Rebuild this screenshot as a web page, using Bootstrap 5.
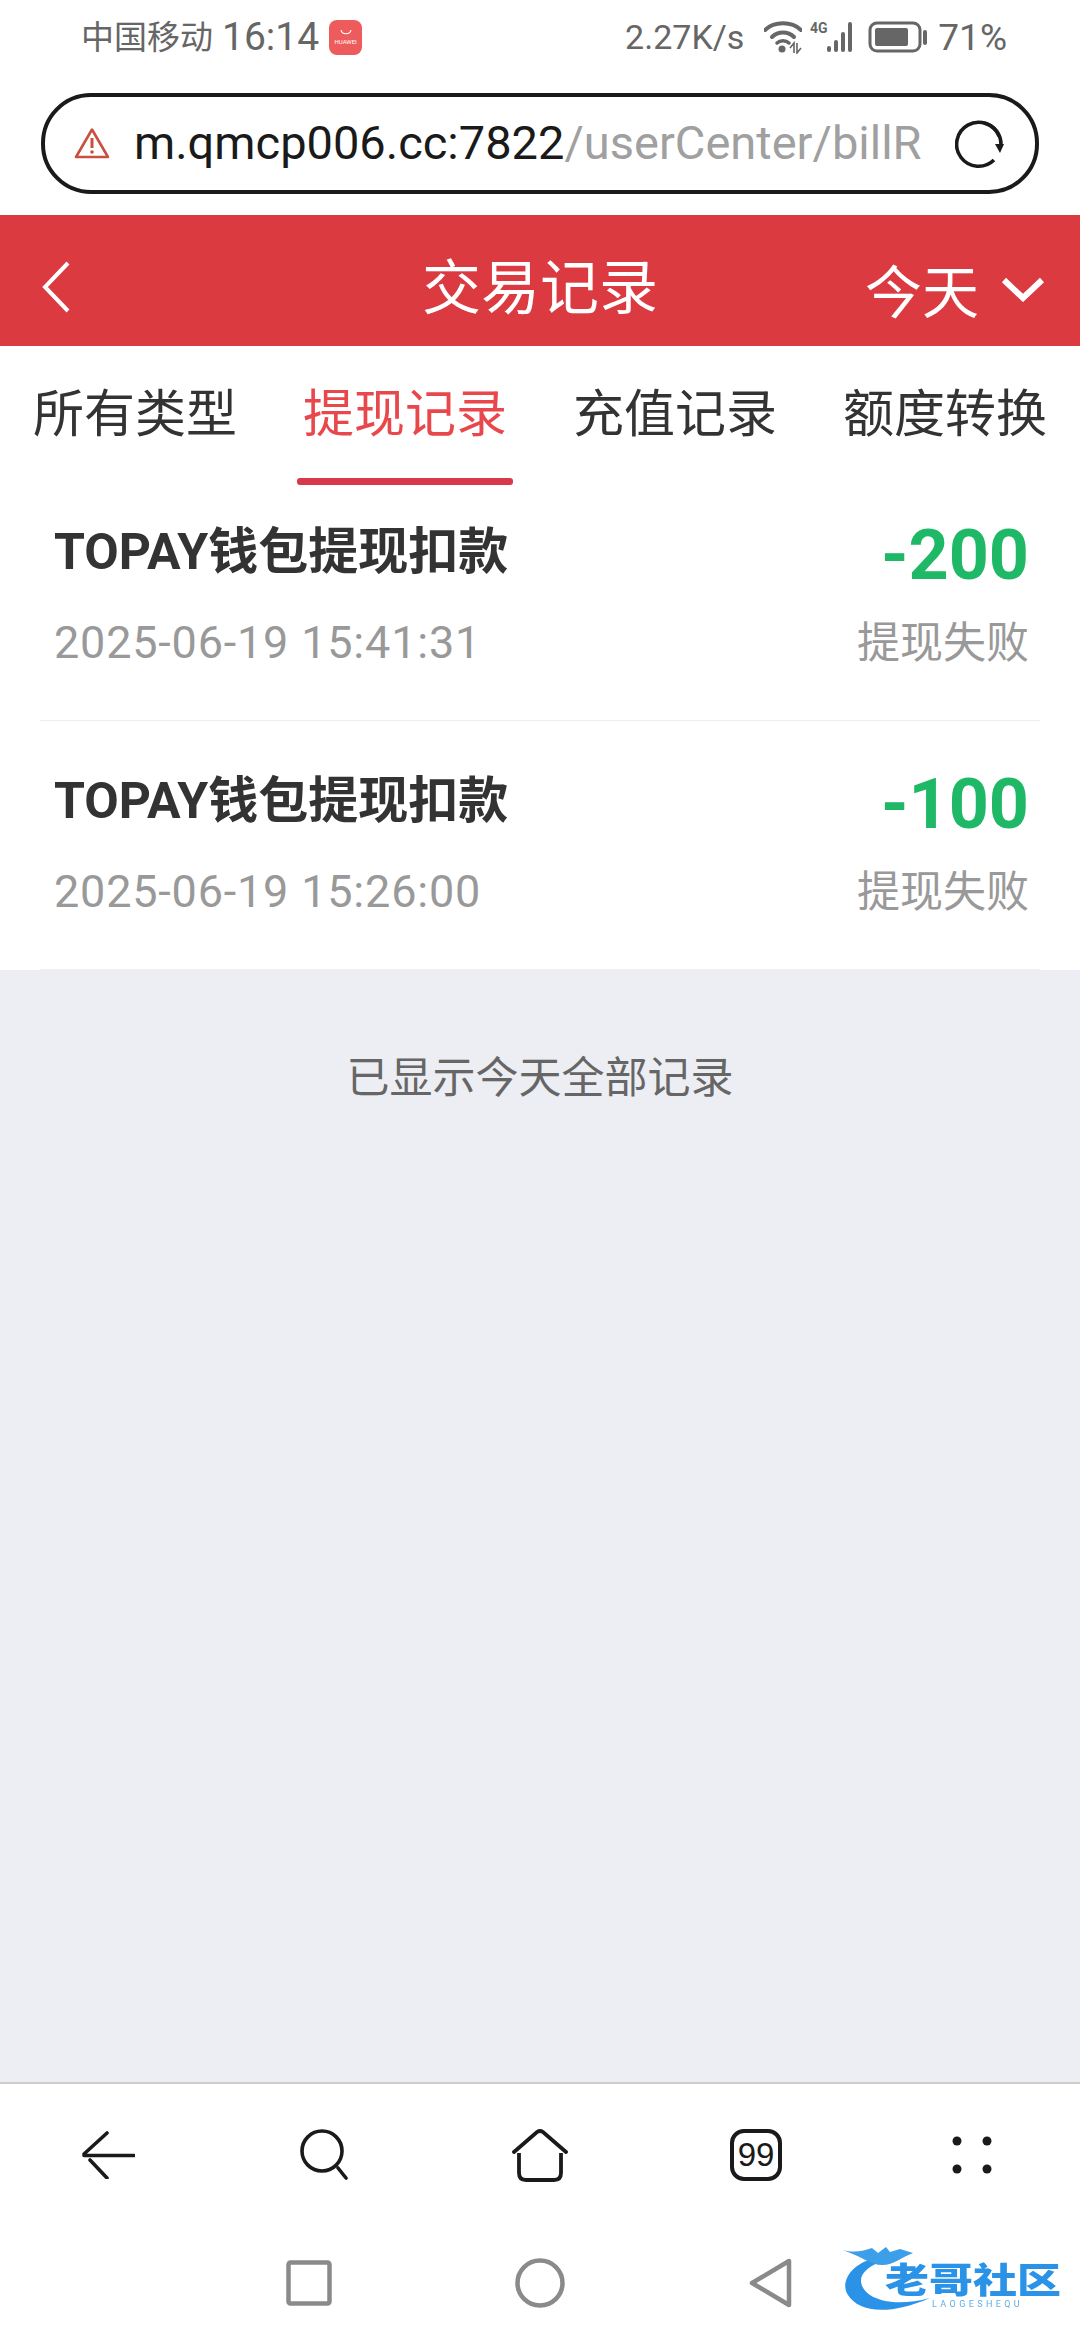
<!DOCTYPE html>
<html lang="zh-CN">
<head>
    <meta charset="UTF-8">
    <meta name="viewport" content="width=device-width, initial-scale=1.0">
    <title>交易记录</title>
    <link href="https://cdn.jsdelivr.net/npm/bootstrap@5.3.3/dist/css/bootstrap.min.css" rel="stylesheet">
    <style>
        html, body { width: 1080px; height: 2340px; overflow: hidden; }
        body { font-family: Roboto, "Noto Sans CJK SC", sans-serif; background: #fff; }
        svg { display: block; }

        /* status bar */
        .status-strip { height: 74px; padding: 0 73px 0 81px; color: #666; }
        .carrier { font-size: 33px; line-height: 1; }
        .clock { font-size: 39px; font-weight: 400; line-height: 1; margin-left: 9px; }
        .huawei-tile { width: 33px; height: 35px; margin-left: 10px; border-radius: 8px; background: #ee5b5c; color: #fff; font-size: 6px; line-height: 1; }
        .net-speed { font-size: 34px; line-height: 1; margin-right: 20px; }
        .batt-level { font-size: 37px; line-height: 1; margin-left: 10px; }

        /* address bar */
        .url-wrap { padding: 19px 41px 21px; }
        .url-box { height: 101px; border: 4px solid #1a1a1a; border-radius: 50px; padding: 0 30px 0 29px; }
        .url-text { font-size: 47px; line-height: 1.2; margin-left: 24px; white-space: nowrap; color: #1a1a1a; }
        .url-path { color: #a0a0a0; }

        /* red header */
        .top-band { height: 131px; background: #da3a40; color: #fff; padding: 0 35px 0 41px; }
        .band-back { margin-top: 12px; }
        .band-title { font-size: 59px; line-height: 1; left: 0; right: 0; top: 44px; }
        .band-range { font-size: 57px; line-height: 1; margin-top: 26px; }
        .band-chevron { margin-top: 16px; margin-left: 22px; }

        /* tabs */
        .tab-cell { padding-top: 34px; height: 140px; }
        .tab-label { font-size: 51px; line-height: 70px; color: #333; }
        .tab-cell.is-on .tab-label { color: #e8474c; }
        .tab-bar { width: 216px; height: 7px; margin-top: 28px; border-radius: 3px; }
        .tab-cell.is-on .tab-bar { background: #d8394a; }

        /* bill rows */
        .bill-list { padding: 0 40px; }
        .bill-row { padding: 50px 11px 47px 14px; border-bottom: 1px solid #eee; }
        .bill-row:first-child { padding-top: 36px; }
        .bill-name { font-size: 50px; font-weight: 700; line-height: 60px; color: #333; }
        .bill-time { font-size: 45px; line-height: 60px; margin-top: 31px; color: #999; letter-spacing: .8px; }
        .bill-amount { font-size: 70px; font-weight: 700; line-height: 60px; padding-top: 3px; color: #1fb866; }
        .bill-state { font-size: 43px; line-height: 60px; margin-top: 28px; color: #999; }

        .empty-area { background: #edeef3; }
        .end-note { font-size: 43px; line-height: 44px; padding-top: 86px; color: #666; }

        /* browser toolbar + system nav */
        .tool-strip { height: 143px; border-top: 2px solid #ccc; }
        .sys-strip { height: 115px; }
        .sys-slot { width: 231px; }
        .tab-count { font-family: "Liberation Sans", sans-serif; font-size: 33px; }

        /* watermark sits over the nav bar */
        .mark-logo { right: 18px; bottom: 28px; width: 220px; height: 67px; filter: blur(.5px); }
        .mark-cn { left: 43px; top: 20px; height: 32px; font-size: 44px; line-height: 32px; font-weight: 900; color: #2a93e8; white-space: nowrap; transform: scaleY(.8); }
        .mark-en { left: 90px; top: 54px; font-size: 9px; line-height: 10px; letter-spacing: 3.4px; color: #5aaeea; white-space: nowrap; }
    </style>
</head>
<body>

<div class="d-flex flex-column vh-100">

    <!-- Status bar -->
    <div class="status-strip d-flex justify-content-between align-items-center flex-shrink-0">
        <div class="d-flex align-items-center">
            <span class="carrier">中国移动</span>
            <span class="clock">16:14</span>
            <span class="huawei-tile d-flex flex-column align-items-center justify-content-center gap-1">
                <svg width="14" height="6" viewBox="0 0 14 6"><path d="M2 1c1 5 9 5 10 0" fill="none" stroke="#fff" stroke-width="1.2"/></svg>
                HUAWEI
            </span>
        </div>
        <div class="d-flex align-items-center">
            <span class="net-speed">2.27K/s</span>
            <svg width="38" height="34" viewBox="0 0 38 34">
                <path d="M1 10C10 1 28 1 37 10" fill="none" stroke="#666" stroke-width="4" stroke-linecap="round"/>
                <path d="M8 17C14 11 24 11 30 17" fill="none" stroke="#666" stroke-width="4" stroke-linecap="round"/>
                <path d="M13 23C16 20 22 20 25 23" fill="none" stroke="#666" stroke-width="3.5" stroke-linecap="round"/>
                <circle cx="18" cy="29" r="3.5" fill="#666"/>
                <path d="M26 28l4-5v10M33 23v10l4-5" fill="none" stroke="#666" stroke-width="1.6"/>
            </svg>
            <svg width="50" height="34" viewBox="0 0 50 34" class="ms-2">
                <text x="0" y="13" font-family="Roboto" font-size="14" font-weight="700" fill="#666">4G</text>
                <rect x="17" y="26" width="4" height="6" rx="2" fill="#666"/>
                <rect x="24" y="20" width="4" height="12" rx="2" fill="#666"/>
                <rect x="31" y="12" width="4" height="20" rx="2" fill="#666"/>
                <rect x="38" y="2" width="4" height="30" rx="2" fill="#666"/>
            </svg>
            <svg width="60" height="32" viewBox="0 0 60 32" class="ms-2">
                <rect x="2" y="2" width="50" height="28" rx="7" fill="none" stroke="#666" stroke-width="3"/>
                <rect x="7" y="7" width="33" height="18" rx="2" fill="#666"/>
                <rect x="55" y="9" width="4" height="15" rx="2" fill="#666"/>
            </svg>
            <span class="batt-level">71%</span>
        </div>
    </div>

    <!-- Address bar -->
    <div class="url-wrap flex-shrink-0">
        <div class="url-box d-flex align-items-center">
            <svg width="36" height="33" viewBox="0 0 36 33" class="flex-shrink-0">
                <path d="M18 2.5L34 30H2Z" fill="none" stroke="#c9503f" stroke-width="2.6" stroke-linejoin="round"/>
                <path d="M18 11v10" stroke="#c9503f" stroke-width="3"/>
                <circle cx="18" cy="25" r="1.8" fill="#c9503f"/>
            </svg>
            <div class="url-text">m.qmcp006.cc:7822<span class="url-path">/userCenter/billR</span></div>
            <svg width="50" height="50" viewBox="0 0 50 50" class="ms-auto flex-shrink-0">
                <path d="M44 17A22 22 0 1 0 39 41" fill="none" stroke="#1a1a1a" stroke-width="3.6"/>
                <path d="M29 4a22 22 0 0 1 17 22" fill="none" stroke="#1a1a1a" stroke-width="3.6"/>
                <path d="M40 25h9l-4 9z" fill="#1a1a1a"/>
            </svg>
        </div>
    </div>

    <!-- Red header -->
    <div class="top-band d-flex justify-content-between align-items-center position-relative flex-shrink-0">
        <svg width="30" height="52" viewBox="0 0 30 52" class="band-back">
            <path d="M27 2L4 26l23 24" fill="none" stroke="#fff" stroke-width="4"/>
        </svg>
        <div class="band-title position-absolute text-center">交易记录</div>
        <div class="d-flex align-items-center">
            <span class="band-range">今天</span>
            <svg width="44" height="26" viewBox="0 0 44 26" class="band-chevron">
                <path d="M3 4l19 18L41 4" fill="none" stroke="#fff" stroke-width="6"/>
            </svg>
        </div>
    </div>

    <!-- Tabs -->
    <div class="row g-0 flex-shrink-0">
        <div class="col-3 tab-cell d-flex flex-column align-items-center"><span class="tab-label">所有类型</span><span class="tab-bar"></span></div>
        <div class="col-3 tab-cell is-on d-flex flex-column align-items-center"><span class="tab-label">提现记录</span><span class="tab-bar"></span></div>
        <div class="col-3 tab-cell d-flex flex-column align-items-center"><span class="tab-label">充值记录</span><span class="tab-bar"></span></div>
        <div class="col-3 tab-cell d-flex flex-column align-items-center"><span class="tab-label">额度转换</span><span class="tab-bar"></span></div>
    </div>

    <!-- Bill list -->
    <div class="bill-list flex-shrink-0">
        <div class="bill-row d-flex justify-content-between">
            <div>
                <div class="bill-name">TOPAY钱包提现扣款</div>
                <div class="bill-time">2025-06-19 15:41:31</div>
            </div>
            <div class="text-end">
                <div class="bill-amount">-200</div>
                <div class="bill-state">提现失败</div>
            </div>
        </div>
        <div class="bill-row d-flex justify-content-between">
            <div>
                <div class="bill-name">TOPAY钱包提现扣款</div>
                <div class="bill-time">2025-06-19 15:26:00</div>
            </div>
            <div class="text-end">
                <div class="bill-amount">-100</div>
                <div class="bill-state">提现失败</div>
            </div>
        </div>
    </div>

    <div class="empty-area flex-grow-1">
        <div class="end-note text-center">已显示今天全部记录</div>
    </div>

    <!-- Browser toolbar -->
    <div class="tool-strip row g-0 align-items-center flex-shrink-0">
        <div class="col d-flex justify-content-center">
            <svg width="54" height="48" viewBox="0 0 54 48">
                <path d="M26 2L3 23M3 24.5h50M9 29l17 18" fill="none" stroke="#1a1a1a" stroke-width="3.6" stroke-linecap="round"/>
            </svg>
        </div>
        <div class="col d-flex justify-content-center">
            <svg width="48" height="52" viewBox="0 0 48 52">
                <circle cx="22" cy="22" r="20" fill="none" stroke="#1a1a1a" stroke-width="3.6"/>
                <path d="M38 39l8 10" stroke="#1a1a1a" stroke-width="3.6" stroke-linecap="round"/>
            </svg>
        </div>
        <div class="col d-flex justify-content-center">
            <svg width="56" height="54" viewBox="0 0 56 54">
                <path d="M2 24L25 4q3-2 6 0l23 20" fill="none" stroke="#1a1a1a" stroke-width="3.8" stroke-linecap="round"/>
                <path d="M7 25v20q0 7 7 7h28q7 0 7-7V25" fill="none" stroke="#1a1a1a" stroke-width="3.8"/>
            </svg>
        </div>
        <div class="col d-flex justify-content-center">
            <svg width="54" height="54" viewBox="0 0 54 54">
                <rect x="3" y="3" width="48" height="48" rx="12" fill="none" stroke="#1a1a1a" stroke-width="4"/>
                <text x="27" y="38" text-anchor="middle" class="tab-count" fill="#1a1a1a">99</text>
            </svg>
        </div>
        <div class="col d-flex justify-content-center">
            <svg width="40" height="38" viewBox="0 0 40 38">
                <circle cx="5" cy="5" r="4.5" fill="#1a1a1a"/>
                <circle cx="35" cy="5" r="4.5" fill="#1a1a1a"/>
                <circle cx="5" cy="33" r="4.5" fill="#1a1a1a"/>
                <circle cx="35" cy="33" r="4.5" fill="#1a1a1a"/>
            </svg>
        </div>
    </div>

    <!-- System nav -->
    <div class="sys-strip d-flex justify-content-center align-items-center flex-shrink-0">
        <div class="sys-slot d-flex justify-content-center">
            <svg width="46" height="46" viewBox="0 0 46 46"><rect x="2.5" y="2.5" width="41" height="41" rx="2" fill="none" stroke="#8a8a8a" stroke-width="4.5"/></svg>
        </div>
        <div class="sys-slot d-flex justify-content-center">
            <svg width="50" height="50" viewBox="0 0 50 50"><circle cx="25" cy="25" r="22.5" fill="none" stroke="#8a8a8a" stroke-width="4.5"/></svg>
        </div>
        <div class="sys-slot d-flex justify-content-center">
            <svg width="44" height="50" viewBox="0 0 44 50"><path d="M40 3v44L3 25Z" fill="none" stroke="#8a8a8a" stroke-width="4.5" stroke-linejoin="round"/></svg>
        </div>
    </div>
</div>

<!-- Watermark logo -->
<div class="mark-logo position-absolute">
    <svg width="220" height="67" viewBox="0 0 220 67" class="position-absolute top-0 start-0">
        <path d="M30 14C8 20-2 38 6 50 16 66 44 72 88 53 62 60 40 58 28 50 14 40 16 26 36 18Z" fill="#2a93e8"/>
        <path d="M1 5C12 8 22 6 30 3l6 5 8-6 4 5 10-3 13 4C60 12 52 20 40 20 30 20 20 12 1 5Z" fill="#3d9fea"/>
    </svg>
    <span class="mark-cn position-absolute">老哥社区</span>
    <span class="mark-en position-absolute">LAOGESHEQU</span>
</div>

<script src="https://cdn.jsdelivr.net/npm/bootstrap@5.3.3/dist/js/bootstrap.bundle.min.js"></script>
</body>
</html>
